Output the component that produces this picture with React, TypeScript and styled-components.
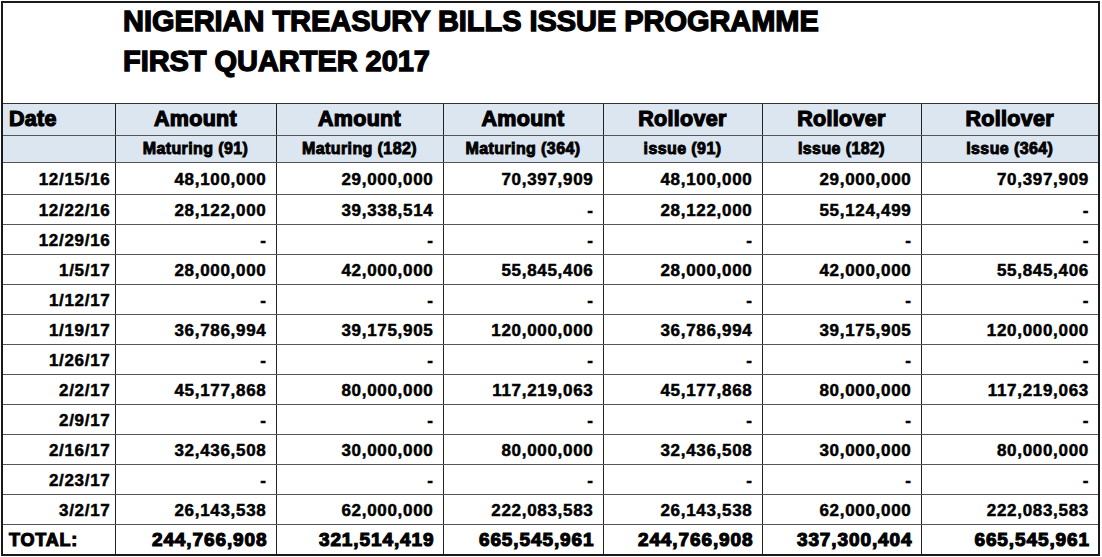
import React from "react";
import styled, { createGlobalStyle } from "styled-components";

const Global = createGlobalStyle`
  html, body { margin: 0; padding: 0; background: #ffffff; }
  body { font-family: "Liberation Sans", Arial, sans-serif; color: #000; }
`;

const Frame = styled.div`
  box-sizing: border-box;
  width: 1099px;
  height: 555px;
  margin: 1px 0 0 1px;
  border: 2px solid #1a1a1a;
  display: flex;
  flex-direction: column;
  overflow: hidden;
`;

const TitleBlock = styled.div`
  box-sizing: border-box;
  height: 101px;
  padding: 3px 0 0 120px;
  display: flex;
  flex-direction: column;
  gap: 10px;
  border-bottom: 1px solid #333;
`;

const TitleLine = styled.div`
  font-size: 29px;
  line-height: 30px;
  font-weight: 700;
  -webkit-text-stroke: 1.3px #000;
  letter-spacing: -0.05px;
  white-space: nowrap;
`;

const Table = styled.table`
  border-collapse: collapse;
  border-style: hidden;
  table-layout: fixed;
  width: 1095px;
`;

const HeadRow = styled.tr<{ $h: number }>`
  height: ${(p) => p.$h}px;
  background: #dce6f1;
`;

const BodyRow = styled.tr<{ $h: number }>`
  height: ${(p) => p.$h}px;
`;

const baseCell = `
  box-sizing: border-box;
  padding: 0;
  border-left: 1px solid #222;
  border-right: 1px solid #222;
  border-top: 1px solid #555;
  border-bottom: 1px solid #555;
  white-space: nowrap;
  font-weight: 700;
`;

const HeadCell = styled.th<{ $left?: boolean }>`
  ${baseCell}
  font-size: 21.5px;
  -webkit-text-stroke: 1.2px #000;
  letter-spacing: 0.3px;
  text-align: ${(p) => (p.$left ? "left" : "center")};
  padding-left: ${(p) => (p.$left ? "6px" : "0")};
  padding-top: 1px;
  vertical-align: middle;
`;

const SubHeadCell = styled.th`
  ${baseCell}
  font-size: 16px;
  -webkit-text-stroke: 0.9px #000;
  letter-spacing: 0.4px;
  text-align: center;
  vertical-align: middle;
  padding-top: 1px;
`;

const Cell = styled.td<{ $pad: number }>`
  ${baseCell}
  font-size: 17px;
  -webkit-text-stroke: 0.5px #000;
  letter-spacing: 0.7px;
  text-align: right;
  padding-right: ${(p) => p.$pad}px;
  padding-top: 3px;
  vertical-align: middle;
`;

const TotalLabel = styled.td`
  ${baseCell}
  font-size: 18px;
  -webkit-text-stroke: 1.1px #000;
  letter-spacing: 0.8px;
  text-align: left;
  padding-left: 6px;
  padding-top: 2px;
  vertical-align: middle;
`;

const TotalCell = styled.td<{ $pad: number }>`
  ${baseCell}
  font-size: 19px;
  -webkit-text-stroke: 1.1px #000;
  letter-spacing: 0.9px;
  text-align: right;
  padding-right: ${(p) => p.$pad}px;
  padding-top: 2px;
  vertical-align: middle;
`;

const widths = [112, 161, 167, 160, 159, 159, 177];

const heads = ["Amount", "Amount", "Amount", "Rollover", "Rollover", "Rollover"];
const subs = [
  "Maturing (91)",
  "Maturing (182)",
  "Maturing (364)",
  "issue (91)",
  "Issue (182)",
  "Issue (364)",
];

const rows: string[][] = [
  ["12/15/16", "48,100,000", "29,000,000", "70,397,909", "48,100,000", "29,000,000", "70,397,909"],
  ["12/22/16", "28,122,000", "39,338,514", "-", "28,122,000", "55,124,499", "-"],
  ["12/29/16", "-", "-", "-", "-", "-", "-"],
  ["1/5/17", "28,000,000", "42,000,000", "55,845,406", "28,000,000", "42,000,000", "55,845,406"],
  ["1/12/17", "-", "-", "-", "-", "-", "-"],
  ["1/19/17", "36,786,994", "39,175,905", "120,000,000", "36,786,994", "39,175,905", "120,000,000"],
  ["1/26/17", "-", "-", "-", "-", "-", "-"],
  ["2/2/17", "45,177,868", "80,000,000", "117,219,063", "45,177,868", "80,000,000", "117,219,063"],
  ["2/9/17", "-", "-", "-", "-", "-", "-"],
  ["2/16/17", "32,436,508", "30,000,000", "80,000,000", "32,436,508", "30,000,000", "80,000,000"],
  ["2/23/17", "-", "-", "-", "-", "-", "-"],
  ["3/2/17", "26,143,538", "62,000,000", "222,083,583", "26,143,538", "62,000,000", "222,083,583"],
];

const totals = ["244,766,908", "321,514,419", "665,545,961", "244,766,908", "337,300,404", "665,545,961"];

export default function App() {
  return (
    <>
      <Global />
      <Frame>
        <TitleBlock>
          <TitleLine>NIGERIAN TREASURY BILLS ISSUE PROGRAMME</TitleLine>
          <TitleLine>FIRST QUARTER 2017</TitleLine>
        </TitleBlock>
        <Table>
          <colgroup>
            {widths.map((w, i) => (
              <col key={i} style={{ width: w }} />
            ))}
          </colgroup>
          <thead>
            <HeadRow $h={31}>
              <HeadCell $left>Date</HeadCell>
              {heads.map((h, i) => (
                <HeadCell key={i}>{h}</HeadCell>
              ))}
            </HeadRow>
            <HeadRow $h={27}>
              <SubHeadCell />
              {subs.map((s, i) => (
                <SubHeadCell key={i}>{s}</SubHeadCell>
              ))}
            </HeadRow>
          </thead>
          <tbody>
            {rows.map((r, ri) => (
              <BodyRow key={ri} $h={ri === 0 ? 32 : 30}>
                {r.map((v, ci) => (
                  <Cell key={ci} $pad={ci === 0 ? 4 : 9}>
                    {v}
                  </Cell>
                ))}
              </BodyRow>
            ))}
            <BodyRow $h={30}>
              <TotalLabel>TOTAL:</TotalLabel>
              {totals.map((t, i) => (
                <TotalCell key={i} $pad={8}>
                  {t}
                </TotalCell>
              ))}
            </BodyRow>
          </tbody>
        </Table>
      </Frame>
    </>
  );
}
